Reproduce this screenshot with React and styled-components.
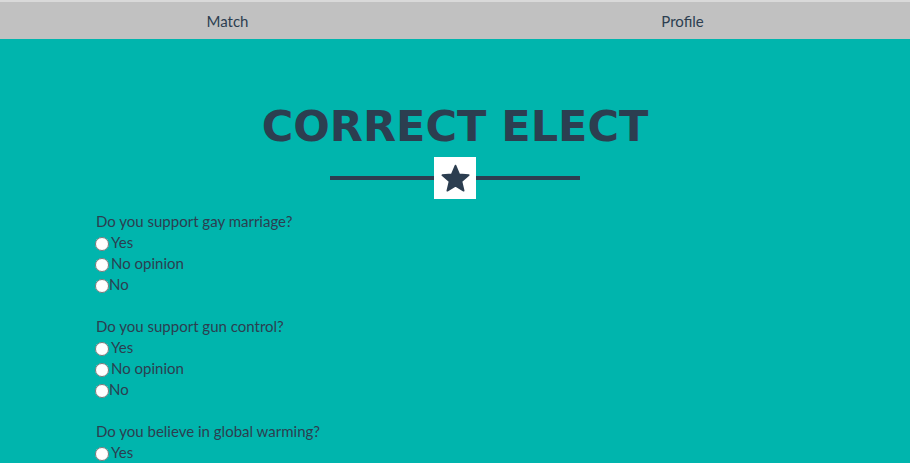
import styled, { createGlobalStyle } from "styled-components";

const GlobalStyle = createGlobalStyle`
    body {
        margin: 0;
        font-family: Lato, "Open Sans", sans-serif;
        color: #2c3e50;
        background: #00b5ad;
    }
`;

const NavBar = styled.nav`
    display: flex;
    height: 37px;
    background: #c1c1c1;
    border-top: 2px solid #d9d9d9;
`;

const NavItem = styled.a`
    flex: 1;
    display: flex;
    align-items: center;
    justify-content: center;
    font-size: 15px;
    color: #2c3e50;
    text-decoration: none;
    cursor: pointer;
`;

const Main = styled.main`
    background: #00b5ad;
    min-height: calc(100vh - 39px);
    padding-top: 64px;
`;

const Header = styled.header`
    display: flex;
    flex-direction: column;
    align-items: center;
    gap: 8px;
`;

const Title = styled.h1`
    margin: 0;
    font-family: "DejaVu Sans", sans-serif;
    font-weight: 700;
    font-size: 43px;
    line-height: 46px;
    color: #2c3e50;
`;

const Divider = styled.div`
    display: flex;
    align-items: center;
`;

const Line = styled.span`
    width: 104px;
    height: 4px;
    background: #2c3e50;
`;

const StarBox = styled.span`
    width: 42px;
    height: 42px;
    background: #fff;
    display: flex;
    align-items: center;
    justify-content: center;
`;

const Form = styled.form`
    padding: 12px 0 0 95px;
`;

const Question = styled.fieldset`
    border: none;
    margin: 0 0 21px;
    padding: 0;
`;

const Prompt = styled.legend`
    padding: 0 0 0 1px;
    font-size: 15px;
    line-height: 21px;
`;

const Option = styled.label`
    display: flex;
    align-items: center;
    font-size: 15px;
    line-height: 21px;
`;

const Radio = styled.input`
    width: 14px;
    height: 14px;
    margin: 2px ${(p) => p.$gap}px 0 0;
`;

const Star = () => (
    <svg width="29" height="29" viewBox="0 0 24 24">
        <path
            d="M12 1.3 L15.06 8.59 L22.94 9.25 L16.95 14.41 L18.76 22.1 L12 18 L5.24 22.1 L7.05 14.41 L1.06 9.25 L8.94 8.59 Z"
            fill="#2c3e50"
            stroke="#2c3e50"
            strokeWidth="1.4"
            strokeLinejoin="round"
        />
    </svg>
);

const questions = [
    { id: "marriage", text: "Do you support gay marriage?" },
    { id: "guns", text: "Do you support gun control?" },
    { id: "climate", text: "Do you believe in global warming?" },
];

const options = [
    { value: "yes", label: "Yes", gap: 2 },
    { value: "none", label: "No opinion", gap: 2 },
    { value: "no", label: "No", gap: 0 },
];

export default function App() {
    return (
        <>
            <GlobalStyle />
            <NavBar>
                <NavItem>Match</NavItem>
                <NavItem>Profile</NavItem>
            </NavBar>
            <Main>
                <Header>
                    <Title>CORRECT ELECT</Title>
                    <Divider>
                        <Line />
                        <StarBox>
                            <Star />
                        </StarBox>
                        <Line />
                    </Divider>
                </Header>
                <Form>
                    {questions.map((q) => (
                        <Question key={q.id}>
                            <Prompt>{q.text}</Prompt>
                            {options.map((o) => (
                                <Option key={o.value}>
                                    <Radio type="radio" name={q.id} value={o.value} $gap={o.gap} />
                                    {o.label}
                                </Option>
                            ))}
                        </Question>
                    ))}
                </Form>
            </Main>
        </>
    );
}
